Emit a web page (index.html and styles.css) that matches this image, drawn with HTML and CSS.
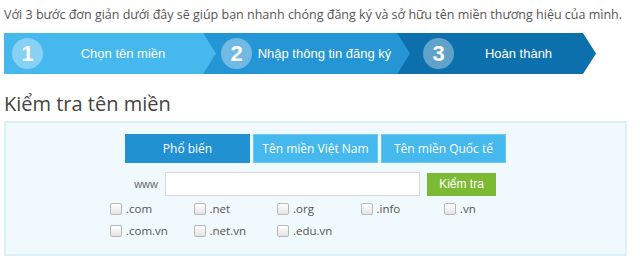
FILE: index.html
```html
<!DOCTYPE html>
<html lang="vi">
<head>
<meta charset="utf-8">
<link rel="stylesheet" href="styles.css">
</head>
<body>
<p class="intro">Với 3 bước đơn giản dưới đây sẽ giúp bạn nhanh chóng đăng ký và sở hữu tên miền thương hiệu của mình.</p>
<div class="steps">
  <div class="step step1"><span class="num">1</span><span class="label">Chọn tên miền</span></div>
  <div class="step step2"><span class="num">2</span><span class="label">Nhập thông tin đăng ký</span></div>
  <div class="step step3"><span class="num">3</span><span class="label">Hoàn thành</span></div>
</div>
<h2 class="title">Kiểm tra tên miền</h2>
<div class="box">
  <div class="tabs">
    <div class="tab active">Phổ biến</div>
    <div class="tab">Tên miền Việt Nam</div>
    <div class="tab">Tên miền Quốc tế</div>
  </div>
  <div class="search">
    <span class="www">www</span>
    <input class="field" type="text">
    <button class="btn">Kiểm tra</button>
  </div>
  <div class="exts">
    <label class="ext"><span class="cb"></span>.com</label>
    <label class="ext"><span class="cb"></span>.net</label>
    <label class="ext"><span class="cb"></span>.org</label>
    <label class="ext"><span class="cb"></span>.info</label>
    <label class="ext"><span class="cb"></span>.vn</label>
    <label class="ext"><span class="cb"></span>.com.vn</label>
    <label class="ext"><span class="cb"></span>.net.vn</label>
    <label class="ext"><span class="cb"></span>.edu.vn</label>
  </div>
</div>
</body>
</html>
```
FILE: styles.css
```css
* { box-sizing: border-box; }
html, body { margin: 0; padding: 0; background: #fff; }
body { padding: 0 4px; font-family: "Open Sans", sans-serif; color: #555; width: 640px; }
.intro { margin: 0; padding-top: 6px; height: 33px; font-size: 12.5px; line-height: 17px; color: #555; }
.steps { display: flex; height: 41px; width: 592px; }
.step { position: relative; display: flex; align-items: center; height: 41px; color: #fff; font-family: "Liberation Sans", sans-serif; font-size: 13px; }
.step::after { content: ""; position: absolute; top: 0; right: -13px; width: 13px; height: 41px; clip-path: polygon(0 0, 100% 50%, 0 100%); z-index: 2; }
.step1 { width: 199px; background: #45b8ee; padding-left: 8px; }
.step1::after { background: #45b8ee; }
.step2 { width: 194px; background: #2596d5; padding-left: 18px; }
.step2::after { background: #2596d5; }
.step3 { width: 186px; background: #0c70ac; padding-left: 26px; }
.step3::after { background: #0c70ac; }
.num { width: 31px; height: 31px; border-radius: 50%; background: rgba(255,255,255,0.35); display: flex; align-items: center; justify-content: center; font-size: 22px; font-weight: bold; flex: none; }
.label { flex: 1; text-align: center; }
.title { margin: 0; height: 47px; padding-top: 17px; font-size: 20px; font-weight: normal; line-height: 26px; color: #444; }
.box { width: 623px; height: 135px; border: 2px solid #dcf0fa; background: #eff9fe; padding-top: 11px; }
.tabs { display: flex; gap: 3px; margin-left: 119px; }
.tab { width: 125px; height: 29px; background: #45b8ee; border: 1px solid #6ccaf3; color: #fff; font-size: 12px; display: flex; align-items: center; justify-content: center; }
.tab.active { background: #2191d2; border-color: #2191d2; }
.search { display: flex; align-items: center; margin-top: 9px; height: 24px; }
.www { width: 159px; text-align: right; padding-right: 7px; font-size: 11px; color: #666; font-family: "Liberation Sans", sans-serif; }
.field { width: 255px; height: 24px; border: 1px solid #d8d8d8; background: #fff; margin: 0; padding: 0; }
.btn { margin-left: 7px; width: 69px; height: 23px; background: #7cba34; border: none; color: #fff; font-size: 12px; font-family: "Liberation Sans", sans-serif; padding: 0; }
.exts { display: grid; grid-template-columns: repeat(5, 83.5px); row-gap: 5px; margin-left: 104px; margin-top: 4px; }
.ext { display: flex; align-items: center; font-size: 11.5px; color: #555; height: 17px; }
.cb { width: 12px; height: 12px; border: 1px solid #b9b9b9; border-radius: 2px; background: linear-gradient(#fff, #e4e4e4); margin-right: 4px; flex: none; }
```
